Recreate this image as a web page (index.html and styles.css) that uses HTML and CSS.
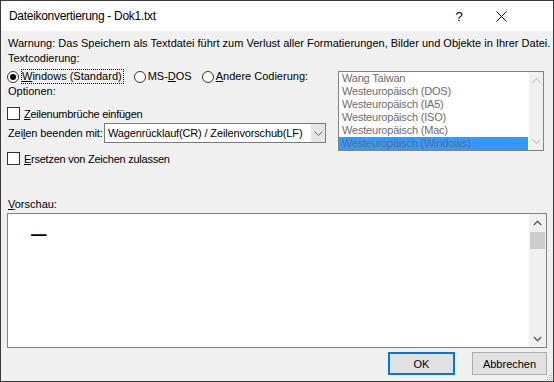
FILE: index.html
```html
<!DOCTYPE html>
<html lang="de">
<head>
<meta charset="utf-8">
<title>Dateikonvertierung - Dok1.txt</title>
<link rel="stylesheet" href="styles.css">
</head>
<body>
<div class="window">
  <div class="titlebar">
    <span class="title">Dateikonvertierung - Dok1.txt</span>
    <span class="help">?</span>
    <span class="close">
      <svg width="11" height="11" viewBox="0 0 11 11"><path d="M0.5 0.5 L10.5 10.5 M10.5 0.5 L0.5 10.5" stroke="#000" stroke-width="1" fill="none"/></svg>
    </span>
    <span class="title-end"></span>
  </div>
  <div class="content">
    <div class="line">Warnung: Das Speichern als Textdatei führt zum Verlust aller Formatierungen, Bilder und Objekte in Ihrer Datei.</div>
    <div class="grid">
      <div class="left">
        <div class="line">Textcodierung:</div>
        <div class="radios">
          <div class="radio">
            <span class="circle checked"></span>
            <span class="focus"><u>W</u>indows (Standard)</span>
          </div>
          <div class="radio">
            <span class="circle"></span>
            <span class="rtext">MS-<u>D</u>OS</span>
          </div>
          <div class="radio">
            <span class="circle"></span>
            <span class="rtext"><u>A</u>ndere Codierung:</span>
          </div>
        </div>
        <div class="line">Optionen:</div>
        <div class="check first">
          <span class="box"></span>
          <span class="ctext"><u>Z</u>eilenumbrüche einfügen</span>
        </div>
        <div class="endrow">
          <span class="endlabel">Zei<u>l</u>en beenden mit:</span>
          <div class="combo">
            <span class="combo-text">Wagenrücklauf(CR) / Zeilenvorschub(LF)</span>
            <span class="combo-btn">
              <svg width="9" height="5" viewBox="0 0 9 5"><path d="M0.5 0.5 L4.5 4.5 L8.5 0.5" stroke="#606060" stroke-width="1" fill="none"/></svg>
            </span>
          </div>
        </div>
        <div class="check second">
          <span class="box"></span>
          <span class="ctext"><u>E</u>rsetzen von Zeichen zulassen</span>
        </div>
      </div>
      <div class="listbox">
        <div class="items">
          <div class="item">Wang Taiwan</div>
          <div class="item">Westeuropäisch (DOS)</div>
          <div class="item">Westeuropäisch (IA5)</div>
          <div class="item">Westeuropäisch (ISO)</div>
          <div class="item">Westeuropäisch (Mac)</div>
          <div class="item selected">Westeuropäisch (Windows)</div>
        </div>
        <div class="lscroll">
          <span class="arrow">
            <svg width="9" height="5" viewBox="0 0 9 5"><path d="M0.5 4.5 L4.5 0.5 L8.5 4.5" stroke="#c8c8c8" stroke-width="1.2" fill="none"/></svg>
          </span>
          <span class="arrow">
            <svg width="9" height="5" viewBox="0 0 9 5"><path d="M0.5 0.5 L4.5 4.5 L8.5 0.5" stroke="#c8c8c8" stroke-width="1.2" fill="none"/></svg>
          </span>
        </div>
      </div>
    </div>
    <div class="line vorschau"><u>V</u>orschau:</div>
    <div class="preview">
      <div class="ptext"><span class="dash">–</span></div>
      <div class="pscroll">
        <span class="arrow">
          <svg width="9" height="6" viewBox="0 0 9 6"><path d="M0.8 5 L4.5 1.3 L8.2 5" stroke="#606060" stroke-width="1.5" fill="none"/></svg>
        </span>
        <span class="thumb"></span>
        <span class="track"></span>
        <span class="arrow">
          <svg width="9" height="6" viewBox="0 0 9 6"><path d="M0.8 1 L4.5 4.7 L8.2 1" stroke="#606060" stroke-width="1.5" fill="none"/></svg>
        </span>
      </div>
    </div>
    <div class="buttons">
      <button class="btn default">OK</button>
      <button class="btn">Abbrechen</button>
    </div>
  </div>
  <svg class="grip" width="9" height="9" viewBox="0 0 9 9">
    <rect x="7" y="1" width="1" height="1" fill="#b8b8b8"/>
    <rect x="5" y="3" width="1" height="1" fill="#b8b8b8"/>
    <rect x="7" y="3" width="1" height="1" fill="#b8b8b8"/>
    <rect x="3" y="5" width="1" height="1" fill="#b8b8b8"/>
    <rect x="5" y="5" width="1" height="1" fill="#b8b8b8"/>
    <rect x="7" y="5" width="1" height="1" fill="#b8b8b8"/>
    <rect x="1" y="7" width="1" height="1" fill="#b8b8b8"/>
    <rect x="3" y="7" width="1" height="1" fill="#b8b8b8"/>
    <rect x="5" y="7" width="1" height="1" fill="#b8b8b8"/>
    <rect x="7" y="7" width="1" height="1" fill="#b8b8b8"/>
  </svg>
</div>
</body>
</html>
```

FILE: styles.css
```css
* { box-sizing: border-box; }
html, body { margin: 0; padding: 0; }
body {
  width: 554px;
  height: 382px;
  overflow: hidden;
  background: #f0f0f0;
  font-family: "Liberation Sans", Arial, sans-serif;
  font-size: 11px;
  color: #000;
}
u { text-decoration: underline; text-underline-offset: 1px; }

.window {
  position: relative;
  width: 554px;
  height: 382px;
  border: 1px solid #3a3a3a;
  background: #f0f0f0;
  display: flex;
  flex-direction: column;
}

.titlebar {
  flex: none;
  height: 30px;
  background: #fff;
  display: flex;
  align-items: center;
  padding-left: 8px;
}
.title { flex: 1; font-size: 12px; letter-spacing: -0.3px; white-space: nowrap; }
.help { width: 36px; text-align: center; font-size: 13px; }
.close { width: 48px; display: flex; justify-content: center; }
.close svg { display: block; }
.title-end { width: 28px; }

.content {
  flex: 1;
  padding: 5px 6px 0 7px;
  display: flex;
  flex-direction: column;
}
.line { height: 15px; line-height: 15px; white-space: nowrap; }

.grid {
  display: grid;
  grid-template-columns: 330px 206px;
  align-items: start;
}
.left { display: flex; flex-direction: column; }

.radios {
  margin-top: 3px;
  height: 15px;
  display: flex;
  align-items: center;
  gap: 10px;
  white-space: nowrap;
}
.radio { display: flex; align-items: center; height: 15px; }
.circle {
  width: 12px;
  height: 12px;
  border: 1px solid #333;
  border-radius: 50%;
  background: #fff;
  display: flex;
  align-items: center;
  justify-content: center;
  margin-right: 2px;
}
.radio:first-child .circle { margin-left: -1px; margin-right: 2px; }
.circle.checked::after {
  content: "";
  width: 6px;
  height: 6px;
  border-radius: 50%;
  background: #000;
}
.focus {
  border: 1px dotted #000;
  padding: 0 1px 0 0;
  line-height: 13px;
}
.rtext { line-height: 15px; }

.check { display: flex; align-items: center; height: 15px; white-space: nowrap; }
.check.first { margin-top: 7px; }
.check.second { margin-top: 8px; }
.ctext { letter-spacing: -0.25px; }
.box {
  width: 13px;
  height: 13px;
  border: 1px solid #333;
  background: #fff;
  margin-left: -1px;
  margin-right: 4px;
}

.endrow {
  margin-top: 2px;
  height: 20px;
  display: flex;
  align-items: center;
  white-space: nowrap;
}
.endlabel { width: 96px; flex: none; letter-spacing: -0.1px; }
.combo {
  width: 222px;
  height: 20px;
  border: 1px solid #7a7a7a;
  background: #fff;
  display: flex;
  align-items: stretch;
}
.combo-text { flex: 1; padding-left: 3px; line-height: 18px; letter-spacing: -0.15px; }
.combo-btn {
  width: 14px;
  background: #e5e5e5;
  display: flex;
  align-items: center;
  justify-content: center;
}
.combo-btn svg { display: block; }

.listbox {
  margin-top: 20px;
  width: 206px;
  height: 80px;
  border: 1px solid #828282;
  background: #fff;
  display: flex;
}
.items { flex: 1; }
.item {
  height: 13px;
  line-height: 13px;
  padding-left: 3px;
  color: #6d6d6d;
  white-space: nowrap;
  letter-spacing: -0.2px;
}
.item.selected { background: #3399ff; color: #5d6d87; }
.lscroll {
  width: 14px;
  margin-left: 1px;
  background: #f0f0f0;
  display: flex;
  flex-direction: column;
  justify-content: space-between;
}
.lscroll .arrow { height: 17px; display: flex; align-items: center; justify-content: center; }
.arrow svg { display: block; }

.vorschau { margin-top: 31px; }

.preview {
  margin-top: 1px;
  margin-left: -1px;
  height: 135px;
  border: 1px solid #828282;
  background: #fff;
  display: flex;
}
.ptext { flex: 1; padding: 5px 0 0 23px; }
.dash { font-size: 28px; line-height: 28px; display: inline-block; }
.pscroll {
  width: 17px;
  background: #f0f0f0;
  display: flex;
  flex-direction: column;
}
.pscroll .arrow { height: 17px; display: flex; align-items: center; justify-content: center; flex: none; }
.thumb { height: 17px; margin: 1px 1px 0 1px; background: #cdcdcd; flex: none; }
.track { flex: 1; }

.buttons {
  margin-top: 4px;
  display: flex;
  justify-content: flex-end;
  gap: 17px;
}
.btn {
  height: 23px;
  padding: 0;
  font-family: "Liberation Sans", Arial, sans-serif;
  font-size: 11px;
  color: #000;
  background: #e1e1e1;
  border: 1px solid #adadad;
  width: 75px;
}
.btn.default { width: 67px; border: 2px solid #0078d7; }

.grip { position: absolute; right: 0; bottom: 0; display: block; }
```
